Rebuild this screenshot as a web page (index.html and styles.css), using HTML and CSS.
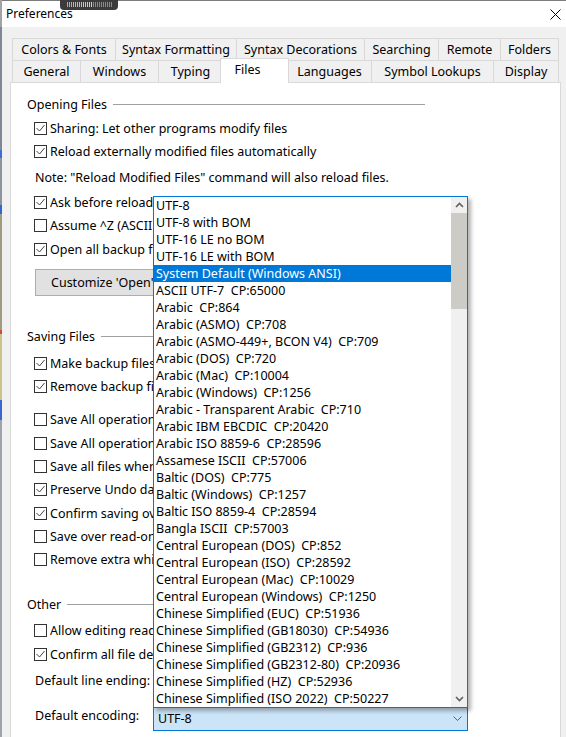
FILE: index.html
```html
<!DOCTYPE html>
<html>
<head>
<meta charset="utf-8">
<title>Preferences</title>
<link rel="stylesheet" href="styles.css">
</head>
<body>
<div class="screen">
  <div class="behind"></div>
  <div class="window">
    <div class="titlebar">
      <span class="title">Preferences</span>
      <svg class="close" width="11" height="11" viewBox="0 0 11 11"><path d="M0.5 0.5 L10.5 10.5 M10.5 0.5 L0.5 10.5" stroke="#000" stroke-width="1" fill="none"/></svg>
    </div>
    <div class="body">
      <div class="tabs">
        <div class="tabrow back">
          <div class="tab">Colors &amp; Fonts</div>
          <div class="tab">Syntax Formatting</div>
          <div class="tab">Syntax Decorations</div>
          <div class="tab">Searching</div>
          <div class="tab">Remote</div>
          <div class="tab">Folders</div>
        </div>
        <div class="tabrow front">
          <div class="tab">General</div>
          <div class="tab">Windows</div>
          <div class="tab">Typing</div>
          <div class="tab sel">Files</div>
          <div class="tab">Languages</div>
          <div class="tab">Symbol Lookups</div>
          <div class="tab">Display</div>
        </div>
      </div>
      <div class="panel">
        <div class="ghead g-open"><span>Opening Files</span></div>
        <div class="cb"><svg viewBox="0 0 13 13"><rect x="0.5" y="0.5" width="12" height="12" fill="#fff" stroke="#333"/><path d="M2.5 6 L5.5 9 L10.5 3" fill="none" stroke="#444"/></svg><span>Sharing: Let other programs modify files</span></div>
        <div class="cb"><svg viewBox="0 0 13 13"><rect x="0.5" y="0.5" width="12" height="12" fill="#fff" stroke="#333"/><path d="M2.5 6 L5.5 9 L10.5 3" fill="none" stroke="#444"/></svg><span>Reload externally modified files automatically</span></div>
        <div class="note">Note: "Reload Modified Files" command will also reload files.</div>
        <div class="cb"><svg viewBox="0 0 13 13"><rect x="0.5" y="0.5" width="12" height="12" fill="#fff" stroke="#333"/><path d="M2.5 6 L5.5 9 L10.5 3" fill="none" stroke="#444"/></svg><span>Ask before reloading modified files</span></div>
        <div class="cb"><svg viewBox="0 0 13 13"><rect x="0.5" y="0.5" width="12" height="12" fill="#fff" stroke="#333"/></svg><span>Assume ^Z (ASCII 26) is end of file</span></div>
        <div class="cb"><svg viewBox="0 0 13 13"><rect x="0.5" y="0.5" width="12" height="12" fill="#fff" stroke="#333"/><path d="M2.5 6 L5.5 9 L10.5 3" fill="none" stroke="#444"/></svg><span>Open all backup files read-only</span></div>
        <div class="btn">Customize 'Open' Dialog...</div>

        <div class="ghead g-save"><span>Saving Files</span></div>
        <div class="cb"><svg viewBox="0 0 13 13"><rect x="0.5" y="0.5" width="12" height="12" fill="#fff" stroke="#333"/><path d="M2.5 6 L5.5 9 L10.5 3" fill="none" stroke="#444"/></svg><span>Make backup files</span></div>
        <div class="cb"><svg viewBox="0 0 13 13"><rect x="0.5" y="0.5" width="12" height="12" fill="#fff" stroke="#333"/><path d="M2.5 6 L5.5 9 L10.5 3" fill="none" stroke="#444"/></svg><span>Remove backup files when closing</span></div>
        <div class="cb sep"><svg viewBox="0 0 13 13"><rect x="0.5" y="0.5" width="12" height="12" fill="#fff" stroke="#333"/></svg><span>Save All operation saves only files in project</span></div>
        <div class="cb"><svg viewBox="0 0 13 13"><rect x="0.5" y="0.5" width="12" height="12" fill="#fff" stroke="#333"/></svg><span>Save All operation saves untitled files</span></div>
        <div class="cb"><svg viewBox="0 0 13 13"><rect x="0.5" y="0.5" width="12" height="12" fill="#fff" stroke="#333"/></svg><span>Save all files when focus is lost</span></div>
        <div class="cb"><svg viewBox="0 0 13 13"><rect x="0.5" y="0.5" width="12" height="12" fill="#fff" stroke="#333"/><path d="M2.5 6 L5.5 9 L10.5 3" fill="none" stroke="#444"/></svg><span>Preserve Undo data after saving</span></div>
        <div class="cb"><svg viewBox="0 0 13 13"><rect x="0.5" y="0.5" width="12" height="12" fill="#fff" stroke="#333"/><path d="M2.5 6 L5.5 9 L10.5 3" fill="none" stroke="#444"/></svg><span>Confirm saving over read-only files</span></div>
        <div class="cb"><svg viewBox="0 0 13 13"><rect x="0.5" y="0.5" width="12" height="12" fill="#fff" stroke="#333"/></svg><span>Save over read-only files</span></div>
        <div class="cb"><svg viewBox="0 0 13 13"><rect x="0.5" y="0.5" width="12" height="12" fill="#fff" stroke="#333"/></svg><span>Remove extra whitespace when saving</span></div>

        <div class="ghead g-other"><span>Other</span></div>
        <div class="cb"><svg viewBox="0 0 13 13"><rect x="0.5" y="0.5" width="12" height="12" fill="#fff" stroke="#333"/></svg><span>Allow editing read-only files</span></div>
        <div class="cb"><svg viewBox="0 0 13 13"><rect x="0.5" y="0.5" width="12" height="12" fill="#fff" stroke="#333"/><path d="M2.5 6 L5.5 9 L10.5 3" fill="none" stroke="#444"/></svg><span>Confirm all file deletions</span></div>
        <div class="field f-line">
          <span class="lbl">Default line ending:</span>
          <div class="combo"></div>
        </div>
        <div class="field f-enc">
          <span class="lbl">Default encoding:</span>
          <div class="combo focus"><span>UTF-8</span><svg class="chev" viewBox="0 0 9 6"><path d="M0.5 0.5 L4.5 4.5 L8.5 0.5" fill="none" stroke="#606060"/></svg></div>
        </div>
      </div>
    </div>
  </div>

  <div class="meter"><div class="bars"></div></div>

  <div class="dropdown">
    <div class="dd-list">
      <div class="dd-item">UTF-8</div>
      <div class="dd-item">UTF-8 with BOM</div>
      <div class="dd-item">UTF-16 LE no BOM</div>
      <div class="dd-item">UTF-16 LE with BOM</div>
      <div class="dd-item sel">System Default (Windows ANSI)</div>
      <div class="dd-item">ASCII UTF-7  CP:65000</div>
      <div class="dd-item">Arabic  CP:864</div>
      <div class="dd-item">Arabic (ASMO)  CP:708</div>
      <div class="dd-item">Arabic (ASMO-449+, BCON V4)  CP:709</div>
      <div class="dd-item">Arabic (DOS)  CP:720</div>
      <div class="dd-item">Arabic (Mac)  CP:10004</div>
      <div class="dd-item">Arabic (Windows)  CP:1256</div>
      <div class="dd-item">Arabic - Transparent Arabic  CP:710</div>
      <div class="dd-item">Arabic IBM EBCDIC  CP:20420</div>
      <div class="dd-item">Arabic ISO 8859-6  CP:28596</div>
      <div class="dd-item">Assamese ISCII  CP:57006</div>
      <div class="dd-item">Baltic (DOS)  CP:775</div>
      <div class="dd-item">Baltic (Windows)  CP:1257</div>
      <div class="dd-item">Baltic ISO 8859-4  CP:28594</div>
      <div class="dd-item">Bangla ISCII  CP:57003</div>
      <div class="dd-item">Central European (DOS)  CP:852</div>
      <div class="dd-item">Central European (ISO)  CP:28592</div>
      <div class="dd-item">Central European (Mac)  CP:10029</div>
      <div class="dd-item">Central European (Windows)  CP:1250</div>
      <div class="dd-item">Chinese Simplified (EUC)  CP:51936</div>
      <div class="dd-item">Chinese Simplified (GB18030)  CP:54936</div>
      <div class="dd-item">Chinese Simplified (GB2312)  CP:936</div>
      <div class="dd-item">Chinese Simplified (GB2312-80)  CP:20936</div>
      <div class="dd-item">Chinese Simplified (HZ)  CP:52936</div>
      <div class="dd-item">Chinese Simplified (ISO 2022)  CP:50227</div>
    </div>
    <div class="dd-scroll">
      <div class="sb-btn"><svg viewBox="0 0 9 6"><path d="M1 5 L4.5 1.5 L8 5" fill="none" stroke="#606060" stroke-width="1.6"/></svg></div>
      <div class="sb-thumb"></div>
      <div class="sb-track"></div>
      <div class="sb-btn"><svg viewBox="0 0 9 6"><path d="M1 1 L4.5 4.5 L8 1" fill="none" stroke="#606060" stroke-width="1.6"/></svg></div>
    </div>
  </div>
</div>
</body>
</html>
```

FILE: styles.css
```css
* { box-sizing: border-box; }

html, body {
  margin: 0;
  padding: 0;
}

body {
  width: 566px;
  height: 737px;
  overflow: hidden;
  background: #f0f0f0;
  color: #000;
  font-family: "Noto Sans", "Liberation Sans", sans-serif;
  font-size: 12.5px;
}

.screen {
  position: relative;
  display: flex;
  width: 566px;
  height: 737px;
  overflow: hidden;
}

.behind {
  flex: none;
  width: 2px;
  background:
    linear-gradient(180deg,
      #a3a3a3 0 27px,
      #7d8895 27px 150px,
      #3a6fd8 150px 158px,
      #8c939c 158px 205px,
      #2f66d0 205px 214px,
      #a09a80 214px 330px,
      #d14a3e 330px 334px,
      #c9c28a 334px 400px,
      #3867cf 400px 420px,
      #9ea4aa 420px 737px);
}

.window {
  flex: 1;
  min-width: 0;
  display: flex;
  flex-direction: column;
}

.titlebar {
  flex: none;
  height: 27px;
  background: #fff;
  border-top: 1px solid #7c7c7c;
  display: flex;
  align-items: center;
  justify-content: space-between;
  padding: 0 5px 0 4px;
}

.title {
  font-size: 12px;
  line-height: 16px;
}

.close {
  width: 11px;
  height: 11px;
  display: block;
}

.body {
  flex: 1;
  min-height: 0;
  display: flex;
  flex-direction: column;
  padding: 11px 0 0 8px;
}

.tabs {
  padding-left: 2px;
}

.tabrow {
  display: grid;
  height: 22px;
}

.tabrow.back {
  grid-template-columns: 103px 121px 128px 74px 62px 59px;
}

.tabrow.front {
  grid-template-columns: 68px 78px 64px 65px 84px 122px 66px;
}

.tab {
  background: #f0f0f0;
  border-top: 1px solid #d9d9d9;
  border-left: 1px solid #d9d9d9;
  display: flex;
  align-items: center;
  justify-content: center;
  white-space: nowrap;
  line-height: 16px;
}

.tab:last-child {
  border-right: 1px solid #d9d9d9;
}

.tab.sel {
  position: relative;
  z-index: 1;
  margin: -2px -2px -1px;
  background: #fff;
  border-right: 1px solid #d9d9d9;
  padding: 0 14px 2px 0;
}

.panel {
  flex: 1;
  width: 551px;
  background: #fff;
  border: 1px solid #d9d9d9;
  border-bottom: none;
  display: flex;
  flex-direction: column;
}

.ghead {
  flex: none;
  display: flex;
  align-items: center;
  height: 20px;
  width: 398px;
  margin-left: 16px;
  white-space: nowrap;
}

.ghead::after {
  content: "";
  flex: 1;
  height: 1px;
  background: #a0a0a0;
  margin-left: 6px;
}

.g-open { margin-top: 11px; margin-bottom: 3px; }
.g-save { margin-top: 30.8px; margin-bottom: 5px; }
.g-other { margin-top: 23.25px; margin-bottom: 4.65px; }

.cb {
  flex: none;
  display: flex;
  align-items: center;
  gap: 3px;
  height: 23.3px;
  margin-left: 23px;
  white-space: nowrap;
}

.cb svg {
  flex: none;
  width: 13px;
  height: 13px;
  display: block;
}

.cb.sep { margin-top: 10px; }

.note {
  flex: none;
  height: 27.4px;
  display: flex;
  align-items: center;
  margin-left: 24px;
  white-space: nowrap;
}

.btn {
  flex: none;
  align-self: flex-start;
  height: 27px;
  margin: 8px 0 0 24px;
  padding: 0 15px;
  background: #e1e1e1;
  border: 1px solid #adadad;
  display: flex;
  align-items: center;
  white-space: nowrap;
}

.field {
  flex: none;
  display: grid;
  grid-template-columns: 118px 315px;
  align-items: start;
  height: 24px;
  margin-left: 24px;
}

.f-line { margin-top: 6px; }
.f-enc { margin-top: 11px; }

.lbl {
  line-height: 18px;
  white-space: nowrap;
}

.combo {
  height: 24px;
  border: 1px solid #adadad;
  background: #e1e1e1;
  display: flex;
  align-items: center;
  justify-content: space-between;
  padding: 0 5px 0 4px;
  line-height: 22px;
}

.combo.focus {
  background: #cce4f7;
  border-color: #0078d7;
}

.chev {
  width: 9px;
  height: 6px;
  display: block;
}

.meter {
  position: absolute;
  left: 60px;
  top: 0;
  width: 58px;
  height: 10px;
  background: #3b3b3b;
  border-radius: 0 0 4px 4px;
  z-index: 3;
}

.bars {
  position: absolute;
  left: 7px;
  top: 2px;
  width: 45px;
  height: 5px;
  background:
    repeating-linear-gradient(90deg, transparent 0 1px, #3b3b3b 1px 2px),
    linear-gradient(90deg, #5fcfb8 0, #d9e36a 25px, #8b8b8b 25px);
}

.dropdown {
  position: absolute;
  left: 153px;
  top: 196px;
  width: 315px;
  height: 512px;
  background: #fff;
  border: 1px solid #0078d7;
  box-shadow: 3px 3px 4px rgba(0, 0, 0, 0.3);
  display: flex;
  z-index: 5;
}

.dd-list {
  flex: 1;
  min-width: 0;
  display: flex;
  flex-direction: column;
  overflow: hidden;
}

.dd-item {
  flex: none;
  height: 17px;
  line-height: 17px;
  padding-left: 2px;
  white-space: pre;
}

.dd-item.sel {
  background: #0078d7;
  color: #fff;
}

.dd-scroll {
  flex: none;
  width: 16px;
  background: #f0f0f0;
  display: flex;
  flex-direction: column;
}

.sb-btn {
  flex: none;
  height: 16px;
  display: flex;
  align-items: center;
  justify-content: center;
}

.sb-btn svg {
  width: 9px;
  height: 6px;
  display: block;
}

.sb-thumb {
  flex: none;
  height: 96px;
  background: #cdcbc6;
}

.sb-track {
  flex: 1;
}
```
